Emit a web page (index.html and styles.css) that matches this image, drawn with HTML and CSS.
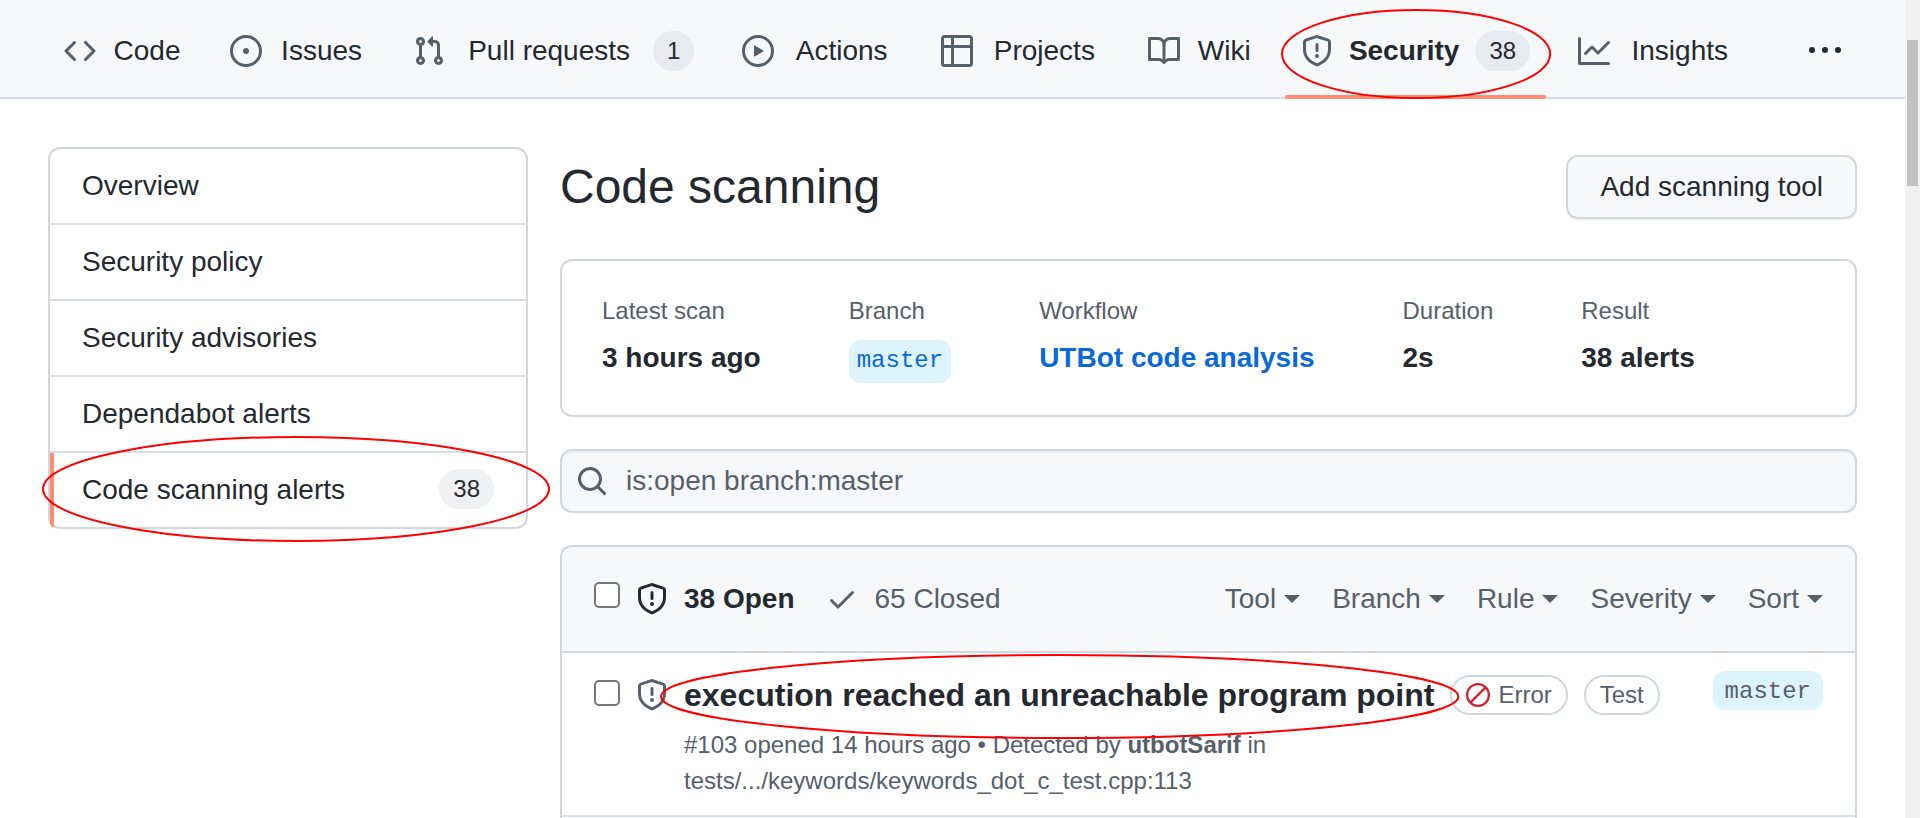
FILE: index.html
```html
<!DOCTYPE html>
<html lang="en">
<head>
<meta charset="utf-8">
<title>Code scanning alerts</title>
<link rel="stylesheet" href="styles.css">
</head>
<body>
<svg class="sprite" aria-hidden="true">
  <symbol id="shield" viewBox="0 0 16 16"><path d="M7.467.133a1.75 1.75 0 011.066 0l5.25 1.68A1.75 1.75 0 0115 3.48V7c0 1.566-.32 3.182-1.303 4.682-.983 1.498-2.585 2.813-5.032 3.855a1.7 1.7 0 01-1.33 0c-2.447-1.042-4.049-2.357-5.032-3.855C1.32 10.182 1 8.566 1 7V3.48a1.75 1.75 0 011.217-1.667l5.25-1.68zm.61 1.429a.25.25 0 00-.153 0l-5.25 1.68a.25.25 0 00-.174.238V7c0 1.358.275 2.666 1.057 3.86.784 1.194 2.121 2.34 4.366 3.297a.2.2 0 00.154 0c2.245-.956 3.582-2.104 4.366-3.298C13.225 9.666 13.5 8.36 13.5 7V3.48a.25.25 0 00-.174-.237l-5.25-1.68zM9 10.5a1 1 0 11-2 0 1 1 0 012 0zm-.25-5.75a.75.75 0 10-1.5 0v3a.75.75 0 001.5 0v-3z"/></symbol>
</svg>
<div class="viewport">
  <div class="page">
    <nav class="tabs" aria-label="Repository">
      <a class="tab" href="#code"><svg class="icon" viewBox="0 0 16 16"><path d="M4.72 3.22a.75.75 0 011.06 1.06L2.06 8l3.72 3.72a.75.75 0 11-1.06 1.06L.47 8.53a.75.75 0 010-1.06l4.25-4.25zm6.56 0a.75.75 0 10-1.06 1.06L13.94 8l-3.72 3.72a.75.75 0 101.06 1.06l4.25-4.25a.75.75 0 000-1.06l-4.25-4.25z"/></svg><span class="tab-label" data-content="Code">Code</span></a>
      <a class="tab" href="#issues"><svg class="icon" viewBox="0 0 16 16"><path d="M8 9.5a1.5 1.5 0 100-3 1.5 1.5 0 000 3z"/><path fill-rule="evenodd" d="M8 0a8 8 0 100 16A8 8 0 008 0zM1.5 8a6.5 6.5 0 1113 0 6.5 6.5 0 01-13 0z"/></svg><span class="tab-label" data-content="Issues">Issues</span></a>
      <a class="tab" href="#pulls"><svg class="icon" viewBox="0 0 16 16"><path fill-rule="evenodd" d="M7.177 3.073L9.573.677A.25.25 0 0110 .854v4.792a.25.25 0 01-.427.177L7.177 3.427a.25.25 0 010-.354zM3.75 2.5a.75.75 0 100 1.5.75.75 0 000-1.5zm-2.25.75a2.25 2.25 0 113 2.122v5.256a2.251 2.251 0 11-1.5 0V5.372A2.25 2.25 0 011.5 3.25zM11 2.5h-1V4h1a1 1 0 011 1v5.628a2.251 2.251 0 101.5 0V5A2.5 2.5 0 0011 2.5zm1 10.25a.75.75 0 111.5 0 .75.75 0 01-1.5 0zM3.75 12a.75.75 0 100 1.5.75.75 0 000-1.5z"/></svg><span class="tab-label" data-content="Pull requests">Pull requests</span><span class="counter">1</span></a>
      <a class="tab" href="#actions"><svg class="icon" viewBox="0 0 16 16"><path fill-rule="evenodd" d="M1.5 8a6.5 6.5 0 1113 0 6.5 6.5 0 01-13 0zM8 0a8 8 0 100 16A8 8 0 008 0zM6.379 5.227A.25.25 0 006 5.442v5.117a.25.25 0 00.379.214l4.264-2.559a.25.25 0 000-.428L6.379 5.227z"/></svg><span class="tab-label" data-content="Actions">Actions</span></a>
      <a class="tab" href="#projects"><svg class="icon" viewBox="0 0 16 16"><path fill-rule="evenodd" d="M0 1.75C0 .784.784 0 1.75 0h12.5C15.216 0 16 .784 16 1.75v12.5A1.75 1.75 0 0114.25 16H1.75A1.75 1.75 0 010 14.25V1.75zM1.5 6.5v7.75c0 .138.112.25.25.25H5v-8H1.5zM6.5 6.5v8h7.75a.25.25 0 00.25-.25V6.5h-8zM14.5 5V1.75a.25.25 0 00-.25-.25H6.5V5h8zM5 5V1.5H1.75a.25.25 0 00-.25.25V5H5z"/></svg><span class="tab-label" data-content="Projects">Projects</span></a>
      <a class="tab" href="#wiki"><svg class="icon" viewBox="0 0 16 16"><path fill-rule="evenodd" d="M0 1.75A.75.75 0 01.75 1h4.253c1.227 0 2.317.59 3 1.501A3.744 3.744 0 0111.006 1h4.245a.75.75 0 01.75.75v10.5a.75.75 0 01-.75.75h-4.507a2.25 2.25 0 00-1.591.659l-.622.621a.75.75 0 01-1.06 0l-.622-.621A2.25 2.25 0 005.258 13H.75a.75.75 0 01-.75-.75V1.75zm8.755 3a2.25 2.25 0 012.25-2.25H14.5v9h-3.757c-.71 0-1.4.201-1.992.572l.004-7.322zm-1.504 7.324l.004-5.073-.002-2.253A2.25 2.25 0 005.003 2.5H1.5v9h3.757a3.75 3.75 0 011.994.574z"/></svg><span class="tab-label" data-content="Wiki">Wiki</span></a>
      <a class="tab tab-selected" href="#security" aria-current="page"><svg class="icon"><use href="#shield"/></svg><span class="tab-label" data-content="Security">Security</span><span class="counter">38</span><svg class="ring ring-tab" aria-hidden="true"><ellipse cx="50%" cy="50%" rx="50%" ry="50%"/></svg></a>
      <a class="tab" href="#insights"><svg class="icon" viewBox="0 0 16 16"><path fill-rule="evenodd" d="M1.5 1.75a.75.75 0 00-1.5 0v12.5c0 .414.336.75.75.75h14.5a.75.75 0 000-1.5H1.5V1.75zm14.28 2.53a.75.75 0 00-1.06-1.06L10 7.94 7.53 5.47a.75.75 0 00-1.06 0L3.22 8.72a.75.75 0 001.06 1.06L7 7.06l2.47 2.47a.75.75 0 001.06 0l5.25-5.25z"/></svg><span class="tab-label" data-content="Insights">Insights</span></a>
      <button class="tab tab-more" type="button" aria-label="More"><svg class="icon icon-dark" viewBox="0 0 16 16"><path d="M8 9a1.5 1.5 0 100-3 1.5 1.5 0 000 3zM1.5 9a1.5 1.5 0 100-3 1.5 1.5 0 000 3zm13 0a1.5 1.5 0 100-3 1.5 1.5 0 000 3z"/></svg></button>
    </nav>

    <div class="layout">
      <nav class="menu" aria-label="Security">
        <a class="menu-item" href="#overview">Overview</a>
        <a class="menu-item" href="#policy">Security policy</a>
        <a class="menu-item" href="#advisories">Security advisories</a>
        <a class="menu-item" href="#dependabot">Dependabot alerts</a>
        <a class="menu-item menu-selected" href="#scanning" aria-current="page">Code scanning alerts<span class="counter counter-light">38</span><svg class="ring ring-menu" aria-hidden="true"><ellipse cx="50%" cy="50%" rx="50%" ry="50%"/></svg></a>
      </nav>

      <main class="main">
        <header class="heading">
          <h1 class="title">Code scanning</h1>
          <button class="btn" type="button">Add scanning tool</button>
        </header>

        <dl class="summary">
          <div><dt>Latest scan</dt><dd>3 hours ago</dd></div>
          <div><dt>Branch</dt><dd><a class="branch" href="#master">master</a></dd></div>
          <div><dt>Workflow</dt><dd><a class="link" href="#workflow">UTBot code analysis</a></dd></div>
          <div><dt>Duration</dt><dd>2s</dd></div>
          <div><dt>Result</dt><dd>38 alerts</dd></div>
        </dl>

        <form class="search">
          <svg class="icon" viewBox="0 0 16 16"><path fill-rule="evenodd" d="M11.5 7a4.499 4.499 0 11-8.998 0A4.499 4.499 0 0111.5 7zm-.82 4.74a6 6 0 111.06-1.06l3.04 3.04a.75.75 0 11-1.06 1.06l-3.04-3.04z"/></svg>
          <input class="search-input" type="text" aria-label="Filter alerts" value="is:open branch:master">
        </form>

        <section class="list">
          <div class="list-head">
            <input class="check check-all" type="checkbox" aria-label="Select all alerts">
            <a class="state state-open" href="#open"><svg class="icon icon-dark"><use href="#shield"/></svg>38 Open</a>
            <a class="state" href="#closed"><svg class="icon" viewBox="0 0 16 16"><path d="M13.78 4.22a.75.75 0 010 1.06l-7.25 7.25a.75.75 0 01-1.06 0L2.22 9.28a.75.75 0 011.06-1.06L6 10.94l6.72-6.72a.75.75 0 011.06 0z"/></svg>65 Closed</a>
            <div class="filters">
              <button class="filter" type="button">Tool</button>
              <button class="filter" type="button">Branch</button>
              <button class="filter" type="button">Rule</button>
              <button class="filter" type="button">Severity</button>
              <button class="filter" type="button">Sort</button>
            </div>
          </div>
          <article class="alert">
            <div class="alert-lead">
              <input class="check" type="checkbox" aria-label="Select alert 103">
              <svg class="icon"><use href="#shield"/></svg>
            </div>
            <div class="alert-body">
              <div class="alert-line">
                <a class="alert-title" href="#alert-103">execution reached an unreachable program point<svg class="ring ring-title" aria-hidden="true"><ellipse cx="50%" cy="50%" rx="50%" ry="50%"/></svg></a>
                <span class="label"><svg class="slash" viewBox="0 0 16 16"><path fill-rule="evenodd" d="M1.5 8a6.5 6.5 0 0110.535-5.096l-9.131 9.131A6.472 6.472 0 011.5 8zm2.465 5.096a6.5 6.5 0 009.131-9.131l-9.131 9.131zM8 0a8 8 0 100 16A8 8 0 008 0z"/></svg>Error</span>
                <span class="label">Test</span>
              </div>
              <p class="meta">#103 opened 14 hours ago • Detected by <b>utbotSarif</b> in<br>tests/.../keywords/keywords_dot_c_test.cpp:113</p>
            </div>
            <a class="branch branch-muted" href="#master">master</a>
          </article>
        </section>
      </main>
    </div>
  </div>
  <div class="scrollbar"><div class="thumb"></div></div>
</div>
</body>
</html>
```
FILE: styles.css
```css
* { box-sizing: border-box; }

body {
  margin: 0;
  background: #fff;
  color: #24292f;
  font: 28px/42px "Liberation Sans", Arial, sans-serif;
}

a { color: inherit; text-decoration: none; }
button, input { font: inherit; color: inherit; }
h1, dl, dd, p { margin: 0; }

.sprite { display: none; }

.viewport { display: flex; min-height: 100vh; }

.page {
  flex: 1;
  min-width: 0;
  display: flex;
  flex-direction: column;
}

.scrollbar { width: 15px; padding: 40px 2px 0; background: #f1f1f1; }
.thumb { height: 146px; background: #c1c1c1; }

.icon {
  flex: none;
  width: 32px;
  height: 32px;
  fill: #57606a;
}
.icon-dark { fill: #24292f; }

/* Red ellipse placed over an element to point it out */
.ring {
  position: absolute;
  z-index: 1;
  overflow: visible;
  fill: none;
  stroke: #f00;
  stroke-width: 2px;
  pointer-events: none;
}
.ring-tab {
  top: 7px;
  left: -3px;
  width: calc(100% + 7px);
  height: calc(100% - 8px);
}
.ring-menu {
  top: -16px;
  left: -7px;
  width: calc(100% + 30px);
  height: calc(100% + 30px);
}
.ring-title {
  top: -14px;
  left: -23px;
  width: calc(100% + 47px);
  height: calc(100% + 31px);
}

/* Repository tabs */
.tabs {
  display: flex;
  gap: 16px;
  padding: 3px 48px 0;
  background: #f6f8fa;
  box-shadow: inset 0 -2px #d8dee4;
}
.tab {
  position: relative;
  display: flex;
  align-items: center;
  gap: 16px;
  height: 96px;
  padding: 0 16px;
  white-space: nowrap;
}
.tab-label { text-align: center; }
.tab-label::before {
  content: attr(data-content);
  display: block;
  height: 0;
  font-weight: 700;
  visibility: hidden;
}
.tab-selected { font-weight: 700; }
.tab-selected::after {
  content: "";
  position: absolute;
  inset: auto 0 0;
  height: 4px;
  border-radius: 2px;
  background: #fd8c73;
}
.tab-more { margin-left: auto; border: 0; background: none; }

.counter {
  padding: 0 14px;
  border-radius: 20px;
  background: #e7eaef;
  font-size: 24px;
  font-weight: 400;
  line-height: 40px;
}
.counter-light { background: #eff1f3; }

/* Two-column layout */
.layout {
  flex: 1;
  display: flex;
  gap: 32px;
  padding: 48px 48px 0;
}

.menu {
  flex: none;
  align-self: flex-start;
  width: 480px;
  border: 2px solid #d0d7de;
  border-radius: 12px;
}
.menu-item {
  position: relative;
  display: flex;
  justify-content: space-between;
  align-items: flex-start;
  padding: 16px 32px;
}
.menu-item + .menu-item { border-top: 2px solid #d8dee4; }
.menu-selected::before {
  content: "";
  position: absolute;
  inset: 0 auto 0 0;
  width: 4px;
  border-bottom-left-radius: 8px;
  background: #fd8c73;
}

.main {
  flex: 1;
  min-width: 0;
  display: flex;
  flex-direction: column;
  gap: 32px;
  padding-top: 8px;
}

.heading {
  display: flex;
  justify-content: space-between;
  align-items: center;
  margin-bottom: 8px;
}
.title { font-size: 48px; font-weight: 400; line-height: 64px; }
.btn {
  padding: 9px 32px;
  border: 2px solid rgba(27, 31, 36, .15);
  border-radius: 12px;
  background: #f6f8fa;
  box-shadow: 0 2px 0 rgba(27, 31, 36, .04);
}

.summary {
  display: flex;
  gap: 88px;
  padding: 32px 40px;
  border: 2px solid #d0d7de;
  border-radius: 12px;
}
.summary dt {
  margin-bottom: 8px;
  color: #57606a;
  font-size: 24px;
  line-height: 36px;
}
.summary dd { font-weight: 700; }
.link { color: #0969da; }

.branch {
  display: inline-block;
  padding: 3px 8px 4px;
  border-radius: 12px;
  background: #ddf4ff;
  color: #0969da;
  font: 400 24px/36px "Liberation Mono", monospace;
}

.search {
  display: flex;
  align-items: center;
  gap: 18px;
  padding: 9px 16px 9px 14px;
  border: 2px solid #d0d7de;
  border-radius: 12px;
  background: #f6f8fa;
  box-shadow: inset 0 2px 0 rgba(208, 215, 222, .2);
}
.search-input {
  flex: 1;
  height: 42px;
  padding: 0;
  border: 0;
  outline: 0;
  background: none;
  color: #57606a;
}

/* Alert list */
.list {
  flex: 1;
  border: solid #d0d7de;
  border-width: 2px 2px 0;
  border-radius: 12px 12px 0 0;
}
.list-head {
  display: flex;
  align-items: center;
  padding: 31px 32px;
  border-bottom: 2px solid #d0d7de;
  border-radius: 10px 10px 0 0;
  background: #f6f8fa;
  color: #57606a;
}
.check {
  flex: none;
  appearance: none;
  width: 26px;
  height: 26px;
  margin: 0 16px 4px 0;
  border: 2px solid #767676;
  border-radius: 5px;
  background: #fff;
}
.check-all { margin-bottom: 8px; }
.state {
  display: flex;
  align-items: center;
  gap: 16px;
  margin-right: 32px;
}
.state-open { color: #24292f; font-weight: 700; }

.filters { display: flex; gap: 32px; margin-left: auto; }
.filter {
  display: flex;
  align-items: center;
  gap: 8px;
  padding: 0;
  border: 0;
  background: none;
}
.filter::after {
  content: "";
  border: 8px solid transparent;
  border-top-color: #57606a;
  border-bottom: 0;
}

.alert {
  display: flex;
  align-items: flex-start;
  padding: 16px 32px;
  border-bottom: 2px solid #d8dee4;
}
.alert-lead {
  display: flex;
  align-items: center;
  height: 52px;
  margin-right: 16px;
}
.alert-body { flex: 1; min-width: 0; }
.alert-line {
  display: flex;
  align-items: center;
  gap: 16px;
  margin-bottom: 6px;
}
.alert-title {
  position: relative;
  font-size: 32px;
  font-weight: 700;
  line-height: 52px;
}
.label {
  display: flex;
  align-items: center;
  gap: 8px;
  padding: 0 14px;
  border: 2px solid #d0d7de;
  border-radius: 20px;
  color: #57606a;
  font-size: 24px;
  line-height: 36px;
}
.slash { width: 24px; height: 24px; fill: #cf222e; }
.meta { color: #57606a; font-size: 24px; line-height: 36px; }
.branch-muted {
  margin-top: 2px;
  padding: 5px 12px 2px;
  color: #57606a;
  line-height: 32px;
}
```
